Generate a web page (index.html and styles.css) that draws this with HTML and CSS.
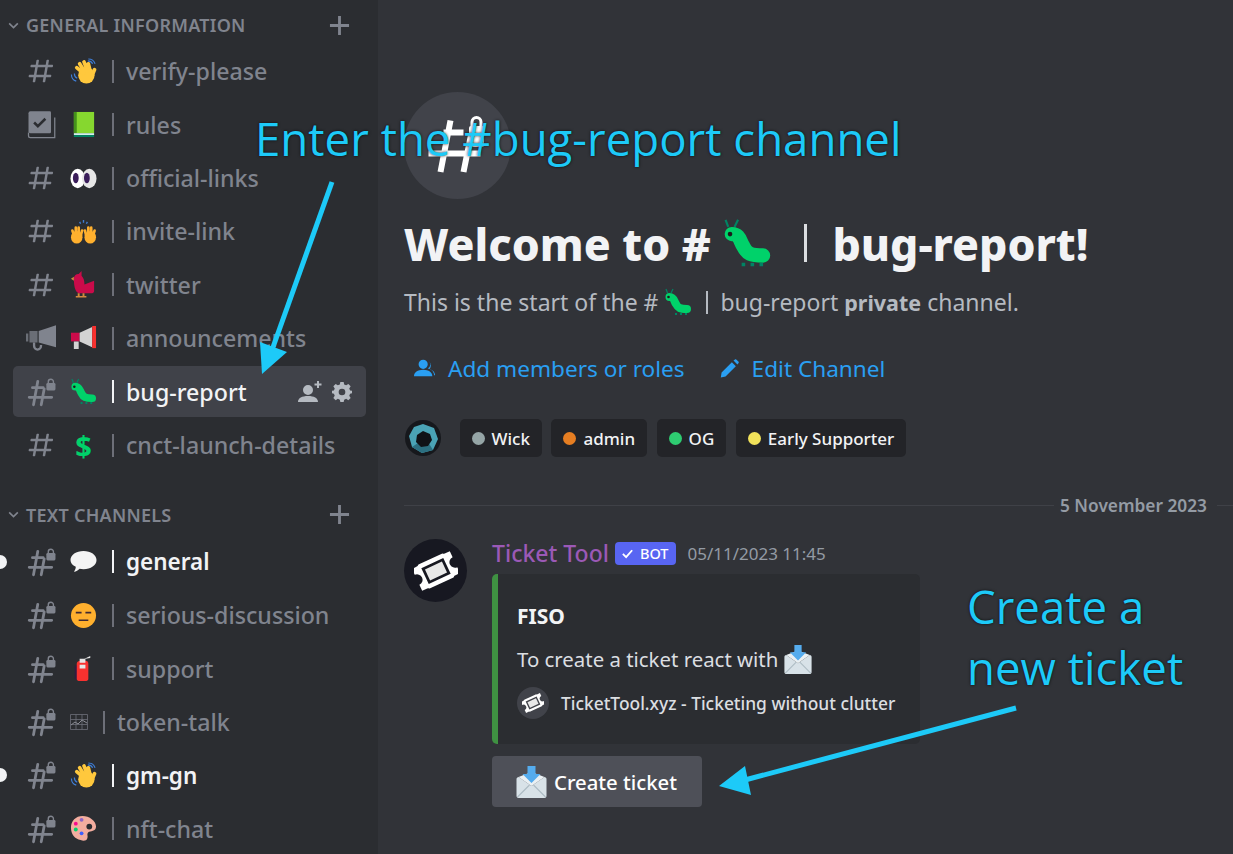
FILE: index.html
```html
<!DOCTYPE html>
<html lang="en">
<head>
    <meta charset="UTF-8">
    <meta name="viewport" content="width=device-width, initial-scale=1.0">
    <title>bug-report</title>
    <link rel="stylesheet" href="styles.css">
</head>
<body>
    <svg class="defs" width="0" height="0">
        <symbol id="hash" viewBox="0 0 24 24"><path fill="currentColor" fill-rule="evenodd" d="M5.88657 21C5.57547 21 5.3399 20.7189 5.39427 20.4126L6.00001 17H2.59511C2.28449 17 2.04905 16.7198 2.10259 16.4138L2.27759 15.4138C2.31946 15.1746 2.52722 15 2.77011 15H6.35001L7.41001 9H4.00511C3.69449 9 3.45905 8.71977 3.51259 8.41381L3.68759 7.41381C3.72946 7.17456 3.93722 7 4.18011 7H7.76001L8.39677 3.41262C8.43914 3.17391 8.64664 3 8.88907 3H9.87344C10.1845 3 10.4201 3.28107 10.3657 3.58738L9.76001 7H15.76L16.3968 3.41262C16.4391 3.17391 16.6466 3 16.8891 3H17.8734C18.1845 3 18.4201 3.28107 18.3657 3.58738L17.76 7H21.1649C21.4755 7 21.711 7.28023 21.6574 7.58619L21.4824 8.58619C21.4406 8.82544 21.2328 9 20.9899 9H17.41L16.35 15H19.7549C20.0655 15 20.301 15.2802 20.2474 15.5862L20.0724 16.5862C20.0306 16.8254 19.8228 17 19.5799 17H16L15.3632 20.5874C15.3209 20.8261 15.1134 21 14.8709 21H13.8866C13.5755 21 13.3399 20.7189 13.3943 20.4126L14 17H8.00001L7.36325 20.5874C7.32088 20.8261 7.11337 21 6.87094 21H5.88657ZM9.41045 9L8.35045 15H14.3504L15.4104 9H9.41045Z"/></symbol>
        <symbol id="hash-lock" viewBox="0 0 28 28"><g fill="none" stroke="currentColor" stroke-width="2.6" stroke-linecap="round"><path d="M11 4 7 26M17 11l-2.800 15M6 10h10M3 19h21"/></g><rect x="19" y="5.500" width="8.500" height="7" rx="1.200" fill="currentColor"/><path d="M20.800 6V4.500a2.400 2.400 0 0 1 4.800 0V6" fill="none" stroke="currentColor" stroke-width="1.300"/></symbol>
        <symbol id="rules" viewBox="0 0 24 24"><path fill="currentColor" d="M2 2.500A1.500 1.500 0 0 1 3.500 1H19a1 1 0 0 1 1 1v15.500a1 1 0 0 1-1 1H3.500A1.500 1.500 0 0 1 2 17z"/><path fill="none" stroke="currentColor" stroke-width="1" d="M2 18v2.500A1.500 1.500 0 0 0 3.500 22H23V6"/><path fill="none" stroke="#2b2d31" stroke-width="2" d="M6.500 10l3 3 6-6"/></symbol>
        <symbol id="megaphone" viewBox="0 0 26 24"><path fill="currentColor" d="M26 1v19L11 16V6z"/><path fill="currentColor" opacity=".75" d="M0 8h2v7H0zM3 6h7v10H3z"/><path fill="none" stroke="currentColor" stroke-width="2" d="M7 16v3a3 3 0 0 0 6 0v-1"/></symbol>
        <symbol id="wave" viewBox="0 0 28 28"><ellipse cx="17" cy="18" rx="8.500" ry="8.500" fill="#ffc83d"/><g fill="none" stroke="#ffc83d" stroke-width="3.800" stroke-linecap="round"><path d="M14 16 7 10M15 14 10 6M18 13 14.500 4M21 14l-2-8M23 18l2.500-6"/></g><path fill="none" stroke="#3f7ed6" stroke-width="1.200" d="M1.500 17c0 3 2 6 5 7M4.500 16c0 2 1 4 3 5M19 1c3 0 6 2 7 5M18.500 3c2 0 4 1 5 3"/></symbol>
        <symbol id="book" viewBox="0 0 28 28"><path fill="#86d72f" d="M4 1h21v22H4z"/><path fill="#44911b" d="M4 1h3v22H4z"/><path fill="#d3f2e8" d="M4 23h21v2H4z"/><path fill="#008463" d="M4 25h21v2H4z"/></symbol>
        <symbol id="eyes" viewBox="0 0 28 28"><ellipse cx="8" cy="14" rx="7.500" ry="10" fill="#fff"/><ellipse cx="20" cy="14" rx="7.500" ry="10" fill="#e6e6e6"/><ellipse cx="6" cy="13.500" rx="3" ry="5.500" fill="#3b1e5b"/><ellipse cx="17.500" cy="13.500" rx="3" ry="5.500" fill="#3b1e5b"/></symbol>
        <symbol id="hands" viewBox="0 0 28 28"><ellipse cx="7" cy="20" rx="6" ry="6.500" fill="#ffb02e"/><ellipse cx="21" cy="20" rx="6" ry="6.500" fill="#ffb02e"/><g fill="none" stroke="#ffb02e" stroke-width="2.800" stroke-linecap="round"><path d="M4 18 2.500 13M6 17V10M9 17V10M11 19l1.500-6M24 18l1.500-5M22 17V10M19 17V10M17 19l-1.500-6"/></g><path fill="none" stroke="#3f7ed6" stroke-width="1.400" d="M10 4l1 2M14 2v3M18 4l-1 2"/></symbol>
        <symbol id="bird" viewBox="0 0 28 28"><path fill="#ca0b4a" d="M4 8c0-3 2-5 5-5l3-3v5c2 2 3 5 3 9l10-4v11c0 1-1 2-2 2H10c-4 0-6-6-6-15z"/><path fill="#d3883e" d="M1 8l3-2v4zM8 23h2v3H8zM13 23h2v3h-2zM6 26h11v1.500H6z"/></symbol>
        <symbol id="horn" viewBox="0 0 28 28"><path fill="#ca0b4a" d="M1 8h9v9H1z"/><path fill="#d3d3d3" d="M10 8l13-6v21l-13-6zM4 17h5v8H4z"/><path fill="#f8312f" d="M23 1h4v23h-4z"/></symbol>
        <symbol id="bug" viewBox="0 0 28 28"><path fill="none" stroke="#008463" stroke-width="1.200" d="M3.500 5 2 1M7 5l2-4"/><path fill="none" stroke="#00d26a" stroke-width="8" stroke-linecap="round" d="M5.500 9C10 9 10 13 12 16c2 4 4 5 11 5"/><circle cx="4.500" cy="9" r="1.300" fill="#1c1c1c"/><path fill="#008463" d="M11 25h2v2h-2zM16 25h2v2h-2zM21 25h2v2h-2z"/></symbol>
        <symbol id="balloon" viewBox="0 0 28 28"><path fill="#f4f4f4" d="M14 3c7.500 0 13.500 4 13.500 9.500S21.500 22 14 22c-1.500 0-3-.2-4-.5-1.500 1.500-3.500 3-6 3 1-1 2-3 2-5C2.500 18 .5 15.500.5 12.500.5 7 6.500 3 14 3z"/></symbol>
        <symbol id="meh" viewBox="0 0 28 28"><circle cx="14" cy="14" r="13" fill="#ffb02e"/><path stroke="#402a32" stroke-width="1.600" d="M6 11h6M16 11h6M9 19h10"/></symbol>
        <symbol id="fire" viewBox="0 0 28 28"><path fill="#321b41" d="M5 11h5v14H5z"/><path fill="#f8312f" d="M7 9c0-2 2-3 4-3h5c2 0 3 1 3 3v16c0 1-1 2-2 2h-8c-1 0-2-1-2-2z"/><path fill="#e6e6e6" d="M10 8V4h5l6-3v2l-5 1v4zM10 10h6v4h-6z"/></symbol>
        <symbol id="chart" viewBox="0 0 18 16"><path fill="none" stroke="#6d6f78" stroke-width=".8" d="M.5.5h17v15H.5zM.5 5.500h17M.5 10.500h17M6 .5v15M12 .5v15"/><path fill="none" stroke="#8a8c94" stroke-width="1" d="M1 11l4-3 3 2 4-4 5 3"/></symbol>
        <symbol id="palette" viewBox="0 0 28 28"><path fill="#f3ad9f" d="M13 1c7 0 14 5 14 11 0 6-6 4-8 6-2 2 0 4-1 6-1 3-4 3-7 2C5 25 1 20 1 13 1 6 6 1 13 1z"/><circle cx="20" cy="12" r="3" fill="#2b2d31"/><circle cx="6" cy="9" r="2" fill="#f70a8d"/><circle cx="12" cy="5" r="2" fill="#8d65c5"/><circle cx="6" cy="15" r="2" fill="#00d26a"/><circle cx="12" cy="19" r="2" fill="#3f5fff"/></symbol>
        <symbol id="mail" viewBox="0 0 30 32"><path fill="#d8e2e8" d="M0 13c0-1 1-2 2-2l13 9 13-9c1 0 2 1 2 2v17c0 1-1 2-2 2H2c-1 0-2-1-2-2z"/><path fill="none" stroke="#aebcc4" stroke-width="1.200" d="M1 31l12-12M29 31 17 19"/><path fill="#eaf0f3" d="M2 11l13-5 13 5-13 9z"/><path fill="#55acee" d="M11 0h8v8h5l-9 9-9-9h5z"/></symbol>
        <symbol id="ticket" viewBox="0 0 40 40"><g transform="rotate(-25 20 20)"><path fill="#fff" fill-rule="evenodd" d="M1 9h4a3 3 0 0 0 3-1h24a3 3 0 0 0 3 1h4v6a5 5 0 0 0 0 10v6h-4a3 3 0 0 0-3 1H8a3 3 0 0 0-3-1H1v-6a5 5 0 0 0 0-10zM9 12v16h22V12z"/><rect x="11.500" y="14.500" width="17" height="11" fill="#e8e8e8"/></g></symbol>
    </svg>

    <div class="app">
        <nav class="sidebar">
            <div class="group-head">
                <svg class="chevron" viewBox="0 0 12 12"><path d="M2 4l4 4 4-4" fill="none" stroke="currentColor" stroke-width="1.500"/></svg>
                <span class="group-title">GENERAL INFORMATION</span>
                <svg class="plus" viewBox="0 0 22 22"><path d="M11 1v20M1 11h20" stroke="currentColor" stroke-width="3"/></svg>
            </div>
            <a class="channel"><svg class="ch-icon"><use href="#hash"/></svg><svg class="ch-emoji"><use href="#wave"/></svg><span class="ch-bar"></span><span class="ch-name">verify-please</span></a>
            <a class="channel"><svg class="ch-icon"><use href="#rules"/></svg><svg class="ch-emoji"><use href="#book"/></svg><span class="ch-bar"></span><span class="ch-name">rules</span></a>
            <a class="channel"><svg class="ch-icon"><use href="#hash"/></svg><svg class="ch-emoji"><use href="#eyes"/></svg><span class="ch-bar"></span><span class="ch-name">official-links</span></a>
            <a class="channel"><svg class="ch-icon"><use href="#hash"/></svg><svg class="ch-emoji"><use href="#hands"/></svg><span class="ch-bar"></span><span class="ch-name">invite-link</span></a>
            <a class="channel"><svg class="ch-icon"><use href="#hash"/></svg><svg class="ch-emoji"><use href="#bird"/></svg><span class="ch-bar"></span><span class="ch-name">twitter</span></a>
            <a class="channel"><svg class="ch-icon"><use href="#megaphone"/></svg><svg class="ch-emoji"><use href="#horn"/></svg><span class="ch-bar"></span><span class="ch-name">announcements</span></a>
            <a class="channel selected"><svg class="ch-icon"><use href="#hash-lock"/></svg><svg class="ch-emoji"><use href="#bug"/></svg><span class="ch-bar"></span><span class="ch-name">bug-report</span>
                <span class="ch-tools">
                    <svg class="tool" viewBox="0 0 24 22"><path fill="currentColor" d="M10 4a5 5 0 1 1 0 10 5 5 0 0 1 0-10zM0 21c0-4 4-6 10-6s10 2 10 6z"/><path stroke="currentColor" stroke-width="2" d="M20 0v7M16.500 3.500h7"/></svg>
                    <svg class="tool gear" viewBox="0 0 24 24"><path fill="currentColor" fill-rule="evenodd" d="M10 0h4l.6 3 2.400 1 2.600-1.700 2.800 2.800L20.700 7.700l1 2.400 2.300.5v3l-2.300.5-1 2.400 1.700 2.600-2.800 2.800-2.600-1.700-2.400 1-.6 2.800h-4l-.6-2.800-2.400-1-2.600 1.700-2.800-2.800 1.700-2.600-1-2.400L0 13.600v-3l2.300-.5 1-2.400L1.600 5.100l2.800-2.800L7 4l2.400-1zM12 8a4 4 0 1 0 0 8 4 4 0 0 0 0-8z"/></svg>
                </span>
            </a>
            <a class="channel"><svg class="ch-icon"><use href="#hash"/></svg><span class="ch-emoji ch-dollar">$</span><span class="ch-bar"></span><span class="ch-name">cnct-launch-details</span></a>

            <div class="group-head second">
                <svg class="chevron" viewBox="0 0 12 12"><path d="M2 4l4 4 4-4" fill="none" stroke="currentColor" stroke-width="1.500"/></svg>
                <span class="group-title">TEXT CHANNELS</span>
                <svg class="plus" viewBox="0 0 22 22"><path d="M11 1v20M1 11h20" stroke="currentColor" stroke-width="3"/></svg>
            </div>
            <a class="channel unread"><svg class="ch-icon"><use href="#hash-lock"/></svg><svg class="ch-emoji"><use href="#balloon"/></svg><span class="ch-bar"></span><span class="ch-name">general</span></a>
            <a class="channel"><svg class="ch-icon"><use href="#hash-lock"/></svg><svg class="ch-emoji"><use href="#meh"/></svg><span class="ch-bar"></span><span class="ch-name">serious-discussion</span></a>
            <a class="channel"><svg class="ch-icon"><use href="#hash-lock"/></svg><svg class="ch-emoji"><use href="#fire"/></svg><span class="ch-bar"></span><span class="ch-name">support</span></a>
            <a class="channel"><svg class="ch-icon"><use href="#hash-lock"/></svg><svg class="ch-emoji small"><use href="#chart"/></svg><span class="ch-bar"></span><span class="ch-name">token-talk</span></a>
            <a class="channel unread"><svg class="ch-icon"><use href="#hash-lock"/></svg><svg class="ch-emoji"><use href="#wave"/></svg><span class="ch-bar"></span><span class="ch-name">gm-gn</span></a>
            <a class="channel"><svg class="ch-icon"><use href="#hash-lock"/></svg><svg class="ch-emoji"><use href="#palette"/></svg><span class="ch-bar"></span><span class="ch-name">nft-chat</span></a>
        </nav>

        <main class="chat">
            <div class="hero-icon">
                <svg viewBox="0 0 62 62"><g fill="none" stroke="#fff" stroke-width="6"><path d="M23.500 5.500 13.500 57M44 20 36.500 57M16.500 17.500h20M1.500 38.500h52"/><path d="M45 12V7a4.500 4.500 0 0 1 9 0v5" stroke-width="3"/></g><rect x="42" y="11" width="15" height="21" rx="2" fill="#fff"/></svg>
            </div>
            <h1 class="welcome">Welcome to # <svg class="welcome-bug"><use href="#bug"/></svg><span class="welcome-bar"></span>bug-report!</h1>
            <p class="intro">This is the start of the # <svg class="intro-bug"><use href="#bug"/></svg><span class="intro-bar"></span>bug-report <b>private</b> channel.</p>
            <div class="actions">
                <a class="action"><svg viewBox="0 0 24 22"><path fill="currentColor" d="M10 2a5 5 0 1 1 0 10 5 5 0 0 1 0-10zM0 20c0-4 4-7 10-7s10 3 10 7zM15 2.500a5 5 0 0 1 0 9c3 .5 8 2.500 8 7.500h-1c0-3-2-6-5-7 2-2 2-7-2-9.500z"/></svg>Add members or roles</a>
                <a class="action"><svg class="pencil" viewBox="0 0 24 24"><path fill="currentColor" d="M2 17 15 4l5 5L7 22l-6 1.500zM17 2l2-1.500c.5-.4 1-.4 1.500 0l3 3c.4.5.4 1 0 1.500L22 7z"/></svg>Edit Channel</a>
            </div>
            <div class="roles">
                <svg class="role-avatar" viewBox="0 0 38 38"><circle cx="19" cy="19" r="18" fill="#16181c"/><path fill="#4aa3b5" d="M19 5l11 4 4 11-5 11-11 3-10-6-3-11 5-9z"/><path fill="#2c6f80" d="M29 31 18 34l-10-6 6-4 10-1z"/><path fill="#101216" d="M19 12l7 3 2 6-4 6-7 1-5-5 1-7z"/></svg>
                <span class="role"><i class="dot grey"></i>Wick</span>
                <span class="role"><i class="dot orange"></i>admin</span>
                <span class="role"><i class="dot green"></i>OG</span>
                <span class="role"><i class="dot yellow"></i>Early Supporter</span>
            </div>
            <div class="divider"><span>5 November 2023</span></div>
            <article class="message">
                <div class="msg-avatar"><svg viewBox="0 0 40 40"><use href="#ticket"/></svg></div>
                <div class="msg-body">
                    <div class="msg-head">
                        <span class="msg-author">Ticket Tool</span>
                        <span class="bot-tag"><svg viewBox="0 0 14 14"><path d="M2 7.500 5.500 11 12 3.500" fill="none" stroke="#fff" stroke-width="2"/></svg>BOT</span>
                        <span class="msg-time">05/11/2023 11:45</span>
                    </div>
                    <div class="embed">
                        <div class="embed-title">FISO</div>
                        <div class="embed-text">To create a ticket react with <svg class="mail"><use href="#mail"/></svg></div>
                        <div class="embed-footer">
                            <span class="footer-icon"><svg viewBox="0 0 40 40"><use href="#ticket"/></svg></span>
                            <span>TicketTool.xyz - Ticketing without clutter</span>
                        </div>
                    </div>
                    <button class="ticket-btn"><svg class="mail-btn"><use href="#mail"/></svg>Create ticket</button>
                </div>
            </article>
        </main>
    </div>

    <!-- annotations drawn over the screenshot -->
    <div class="note note-enter">Enter the #bug-report channel</div>
    <div class="note note-create">Create a<br>new ticket</div>
    <svg class="arrows" width="1233" height="854" viewBox="0 0 1233 854">
        <g fill="none" stroke="#1dcaf8" stroke-width="5"><path d="M332 182 272 350"/><path d="M1016 708 745 780"/></g>
        <path fill="#1dcaf8" d="M262 374 260 342 287 352zM719 786 745 766 751 795z"/>
    </svg>
</body>
</html>
```

FILE: styles.css
```css
* {
    box-sizing: border-box;
}
html, body {
    margin: 0;
    padding: 0;
    height: 854px;
    overflow: hidden;
}
body {
    font-family: "Noto Sans", sans-serif;
    background-color: #313338;
    position: relative;
}
.defs {
    display: block;
    height: 0;
}
.app {
    display: flex;
    height: 854px;
}

/* channel list */
.sidebar {
    width: 378px;
    flex: none;
    background-color: #2b2d31;
    padding-top: 4px;
    color: #80848e;
}
.group-head {
    display: flex;
    align-items: center;
    height: 42px;
    padding-left: 7px;
    padding-right: 28px;
}
.group-head.second {
    margin-top: 23.6px;
    margin-bottom: .7px;
}
.chevron {
    width: 13px;
    height: 13px;
    margin-right: 6px;
}
.group-title {
    flex: 1;
    font-size: 18px;
    font-weight: 600;
    letter-spacing: .25px;
}
.plus {
    width: 21px;
    height: 21px;
}
.channel {
    display: flex;
    align-items: center;
    position: relative;
    height: 50.6px;
    margin: 0 12px 2.8px 13px;
    padding-left: 12.8px;
    border-radius: 5px;
}
.ch-icon {
    width: 30px;
    height: 30px;
    flex: none;
    margin-right: 14.2px;
}
.ch-emoji {
    width: 27px;
    height: 27px;
    flex: none;
    margin-right: 15px;
}
.ch-emoji.small {
    width: 18px;
    height: 16px;
}
.ch-dollar {
    color: #00d26a;
    font-size: 29px;
    font-weight: 700;
    line-height: 27px;
    text-align: center;
}
.ch-bar {
    width: 2px;
    height: 23px;
    background-color: #6d6f78;
    flex: none;
    margin-right: 12px;
}
.ch-name {
    font-size: 23.2px;
    font-weight: 500;
    white-space: nowrap;
}
.channel.selected {
    background-color: #404249;
}
.channel.selected .ch-name, .channel.unread .ch-name {
    color: #f2f3f5;
}
.channel.selected .ch-bar, .channel.unread .ch-bar {
    background-color: #f2f3f5;
}
.channel.unread .ch-name {
    font-size: 22.5px;
    font-weight: 600;
}
.channel.unread::before {
    content: "";
    position: absolute;
    left: -20px;
    top: 18px;
    width: 14px;
    height: 14px;
    border-radius: 50%;
    background-color: #f2f3f5;
}
.ch-tools {
    margin-left: auto;
    margin-right: 14px;
    display: flex;
    align-items: center;
    gap: 10px;
    color: #b5bac1;
}
.tool {
    width: 24px;
    height: 24px;
}
.tool.gear {
    width: 20px;
    height: 20px;
}

/* chat column */
.chat {
    flex: 1;
    padding-left: 26px;
    min-width: 0;
}
.hero-icon {
    width: 107px;
    height: 107px;
    margin-top: 92px;
    border-radius: 50%;
    background-color: #41434a;
    display: flex;
    align-items: center;
    justify-content: center;
}
.hero-icon svg {
    width: 62px;
    height: 62px;
}
.welcome {
    display: flex;
    align-items: center;
    margin: 16px 0 0;
    height: 56px;
    font-size: 44.5px;
    font-weight: 800;
    color: #f2f3f5;
    white-space: pre;
}
.welcome-bug {
    width: 50px;
    height: 50px;
}
.welcome-bar {
    width: 3px;
    height: 38px;
    background-color: #dbdee1;
    margin: 0 25px 0 32px;
}
.intro {
    display: flex;
    align-items: center;
    margin: 15px 0 0;
    height: 32px;
    font-size: 23px;
    color: #b5bac1;
    white-space: pre;
}
.intro b {
    font-size: 21.5px;
    font-weight: 700;
}
.intro-bug {
    width: 28px;
    height: 28px;
}
.intro-bar {
    width: 2px;
    height: 23px;
    background-color: #b5bac1;
    margin: 0 12px 0 14px;
}
.actions {
    display: flex;
    gap: 35px;
    margin: 33px 0 0 10px;
    height: 34px;
    align-items: center;
}
.action {
    display: flex;
    align-items: center;
    font-size: 22.6px;
    color: #2a9ff2;
}
.action svg {
    width: 22px;
    height: 22px;
    margin-right: 12px;
}
.action svg.pencil {
    width: 19px;
    height: 19px;
    margin-right: 13px;
}
.roles {
    display: flex;
    align-items: center;
    gap: 9.5px;
    margin-top: 34px;
    height: 38px;
}
.role-avatar {
    width: 38px;
    height: 38px;
    margin-right: 8px;
}
.role {
    display: flex;
    align-items: center;
    height: 38px;
    padding: 0 12px 0 12px;
    border-radius: 5px;
    background-color: #232428;
    color: #f2f3f5;
    font-size: 17px;
    font-weight: 500;
}
.dot {
    width: 13px;
    height: 13px;
    border-radius: 50%;
    margin-right: 7px;
}
.grey {
    background-color: #95a5a6;
}
.orange {
    background-color: #e67e22;
}
.green {
    background-color: #2ecc71;
}
.yellow {
    background-color: #f1e25a;
}
.divider {
    display: flex;
    align-items: center;
    justify-content: flex-end;
    margin-top: 37px;
    height: 22px;
    background: linear-gradient(#3f4147, #3f4147) center / 100% 1px no-repeat;
    padding-right: 16px;
}
.divider span {
    background-color: #313338;
    padding: 0 10px 0 6px;
    font-size: 17.3px;
    font-weight: 600;
    color: #949ba4;
}
.message {
    display: flex;
    margin-top: 22px;
}
.msg-avatar {
    width: 63px;
    height: 63px;
    margin-top: 1px;
    flex: none;
    border-radius: 50%;
    background-color: #171821;
    display: flex;
    align-items: center;
    justify-content: center;
}
.msg-avatar svg {
    width: 44px;
    height: 44px;
}
.msg-body {
    margin-left: 25px;
}
.msg-head {
    display: flex;
    align-items: center;
    height: 36px;
    white-space: nowrap;
}
.msg-author {
    font-size: 23px;
    font-weight: 500;
    color: #9b59b6;
    margin-bottom: 6px;
}
.bot-tag {
    display: flex;
    align-items: center;
    height: 23px;
    margin: -6px 12px 0 6px;
    padding: 0 7px 0 6px;
    border-radius: 4px;
    background-color: #5865f2;
    color: #fff;
    font-size: 14.5px;
    font-weight: 500;
}
.bot-tag svg {
    width: 13px;
    height: 13px;
    margin-right: 6px;
}
.msg-time {
    font-size: 17px;
    color: #949ba4;
    margin-bottom: 5px;
}
.embed {
    width: 428px;
    height: 170px;
    border-left: 6px solid #3f9142;
    border-radius: 5px;
    background-color: #2b2d31;
    padding: 28px 19px 0;
}
.embed-title {
    font-size: 21px;
    font-weight: 700;
    color: #f2f3f5;
    line-height: 28px;
}
.embed-text {
    display: flex;
    align-items: center;
    margin-top: 14px;
    height: 30px;
    font-size: 20.4px;
    color: #dbdee1;
    white-space: pre;
}
.mail {
    width: 28px;
    height: 29px;
}
.embed-footer {
    display: flex;
    align-items: center;
    margin-top: 13px;
    font-size: 17.4px;
    font-weight: 500;
    color: #dbdee1;
    white-space: nowrap;
}
.footer-icon {
    width: 32px;
    height: 32px;
    border-radius: 50%;
    background-color: #41434a;
    display: flex;
    align-items: center;
    justify-content: center;
    margin-right: 12px;
}
.footer-icon svg {
    width: 22px;
    height: 22px;
}
.ticket-btn {
    display: flex;
    align-items: center;
    width: 210px;
    height: 51px;
    margin-top: 12px;
    padding: 0 0 0 24px;
    border: none;
    border-radius: 4px;
    background-color: #4e5058;
    color: #fff;
    font-family: inherit;
    font-size: 20.3px;
    font-weight: 500;
}
.mail-btn {
    width: 31px;
    height: 32px;
    margin-right: 7px;
}

/* annotations */
.note {
    position: absolute;
    font-family: "Open Sans", sans-serif;
    font-size: 45.6px;
    color: #1dcaf8;
    text-shadow: 0 0 3px rgba(0, 0, 0, .8);
    white-space: nowrap;
}
.note-enter {
    left: 255px;
    top: 107px;
}
.note-create {
    left: 967px;
    top: 576px;
    line-height: 61px;
}
.arrows {
    position: absolute;
    left: 0;
    top: 0;
}
```
